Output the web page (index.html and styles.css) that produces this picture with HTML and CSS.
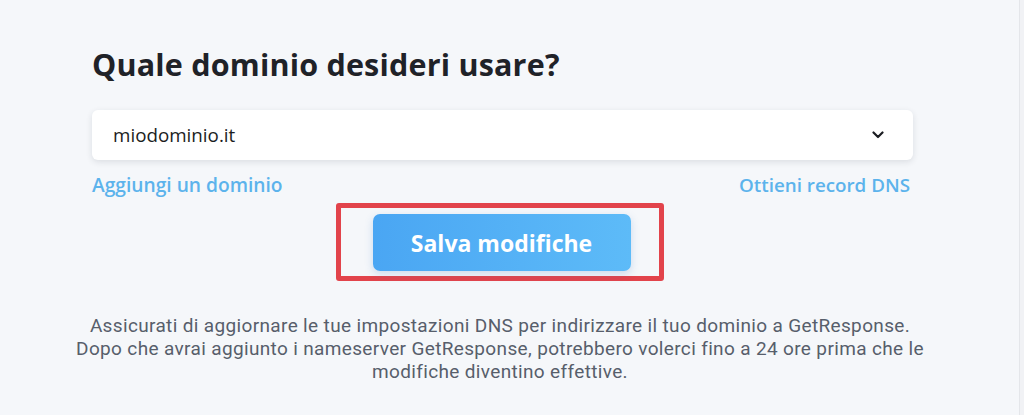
FILE: index.html
```html
<!DOCTYPE html>
<html lang="it">
<head>
<meta charset="utf-8">
<title>Dominio</title>
<link rel="stylesheet" href="styles.css">
</head>
<body>
<div class="page">
  <main class="panel">
    <h1 class="title">Quale dominio desideri usare?</h1>
    <div class="select">
      <span class="select-value">miodominio.it</span>
      <svg class="chevron" width="12" height="8" viewBox="0 0 12 8" aria-hidden="true">
        <path d="M1.5 1.5 L6 6 L10.5 1.5" fill="none" stroke="#1b1d22" stroke-width="2.2" stroke-linecap="round" stroke-linejoin="round"/>
      </svg>
    </div>
    <div class="links">
      <a class="link" href="#">Aggiungi un dominio</a>
      <a class="link" href="#">Ottieni record DNS</a>
    </div>
    <div class="actions">
      <div class="highlight">
        <button class="btn" type="button">Salva modifiche</button>
      </div>
    </div>
    <p class="note">Assicurati di aggiornare le tue impostazioni DNS per indirizzare il tuo dominio a GetResponse.<br>Dopo che avrai aggiunto i nameserver GetResponse, potrebbero volerci fino a 24 ore prima che le modifiche diventino effettive.</p>
  </main>
  <div class="edge"></div>
</div>
</body>
</html>
```
FILE: styles.css
```css
* { box-sizing: border-box; }
html, body { margin: 0; padding: 0; }
body {
  background: #f5f7fa;
  font-family: "Open Sans", "Noto Sans", sans-serif;
  color: #20232a;
  height: 415px;
  overflow: hidden;
}
.page {
  display: flex;
  height: 415px;
}
.panel {
  width: 1019px;
  padding: 43px 0 0 92px;
}
.edge {
  flex: 1;
  border-left: 1px solid #e4e6ea;
  background: #f1f2f5;
}
.title {
  margin: 0;
  font-size: 30.5px;
  font-weight: 700;
  line-height: 42px;
  color: #1f2228;
  letter-spacing: 0.2px;
}
.select {
  margin-top: 25px;
  width: 821px;
  height: 50px;
  background: #fff;
  border-radius: 6px;
  box-shadow: 0 2px 6px rgba(30, 40, 60, 0.12);
  display: flex;
  align-items: center;
  justify-content: space-between;
  padding: 0 29px 0 21px;
}
.select-value {
  font-size: 18.8px;
  font-weight: 500;
  color: #1b1d22;
}
.chevron { display: block; }
.links {
  width: 821px;
  display: flex;
  justify-content: space-between;
  padding-right: 3px;
  margin-top: 13px;
}
.link {
  font-size: 19.2px;
  font-weight: 600;
  color: #5cb3ec;
  text-decoration: none;
  line-height: 24px;
}
.link + .link { font-size: 18.8px; }
.actions {
  width: 821px;
  display: flex;
  justify-content: center;
  margin-top: 6px;
}
.highlight {
  border: 5px solid #e2434b;
  border-radius: 3px;
  padding: 6px 28px 5px 32px;
  margin-left: -6px;
}
.btn {
  display: block;
  width: 258px;
  height: 57px;
  border: 0;
  border-radius: 7px;
  background: linear-gradient(90deg, #4aa6f3 0%, #5dbbf8 100%);
  box-shadow: 0 3px 8px rgba(60, 120, 190, 0.22);
  color: #fff;
  font-family: "Open Sans", "Noto Sans", sans-serif;
  font-size: 23px;
  font-weight: 700;
}
.note {
  width: 880px;
  margin: 33px 0 0 -32px;
  text-align: center;
  font-family: Roboto, "Liberation Sans", sans-serif;
  font-size: 19px;
  letter-spacing: 0.35px;
  line-height: 23px;
  color: #575e6b;
}
```
